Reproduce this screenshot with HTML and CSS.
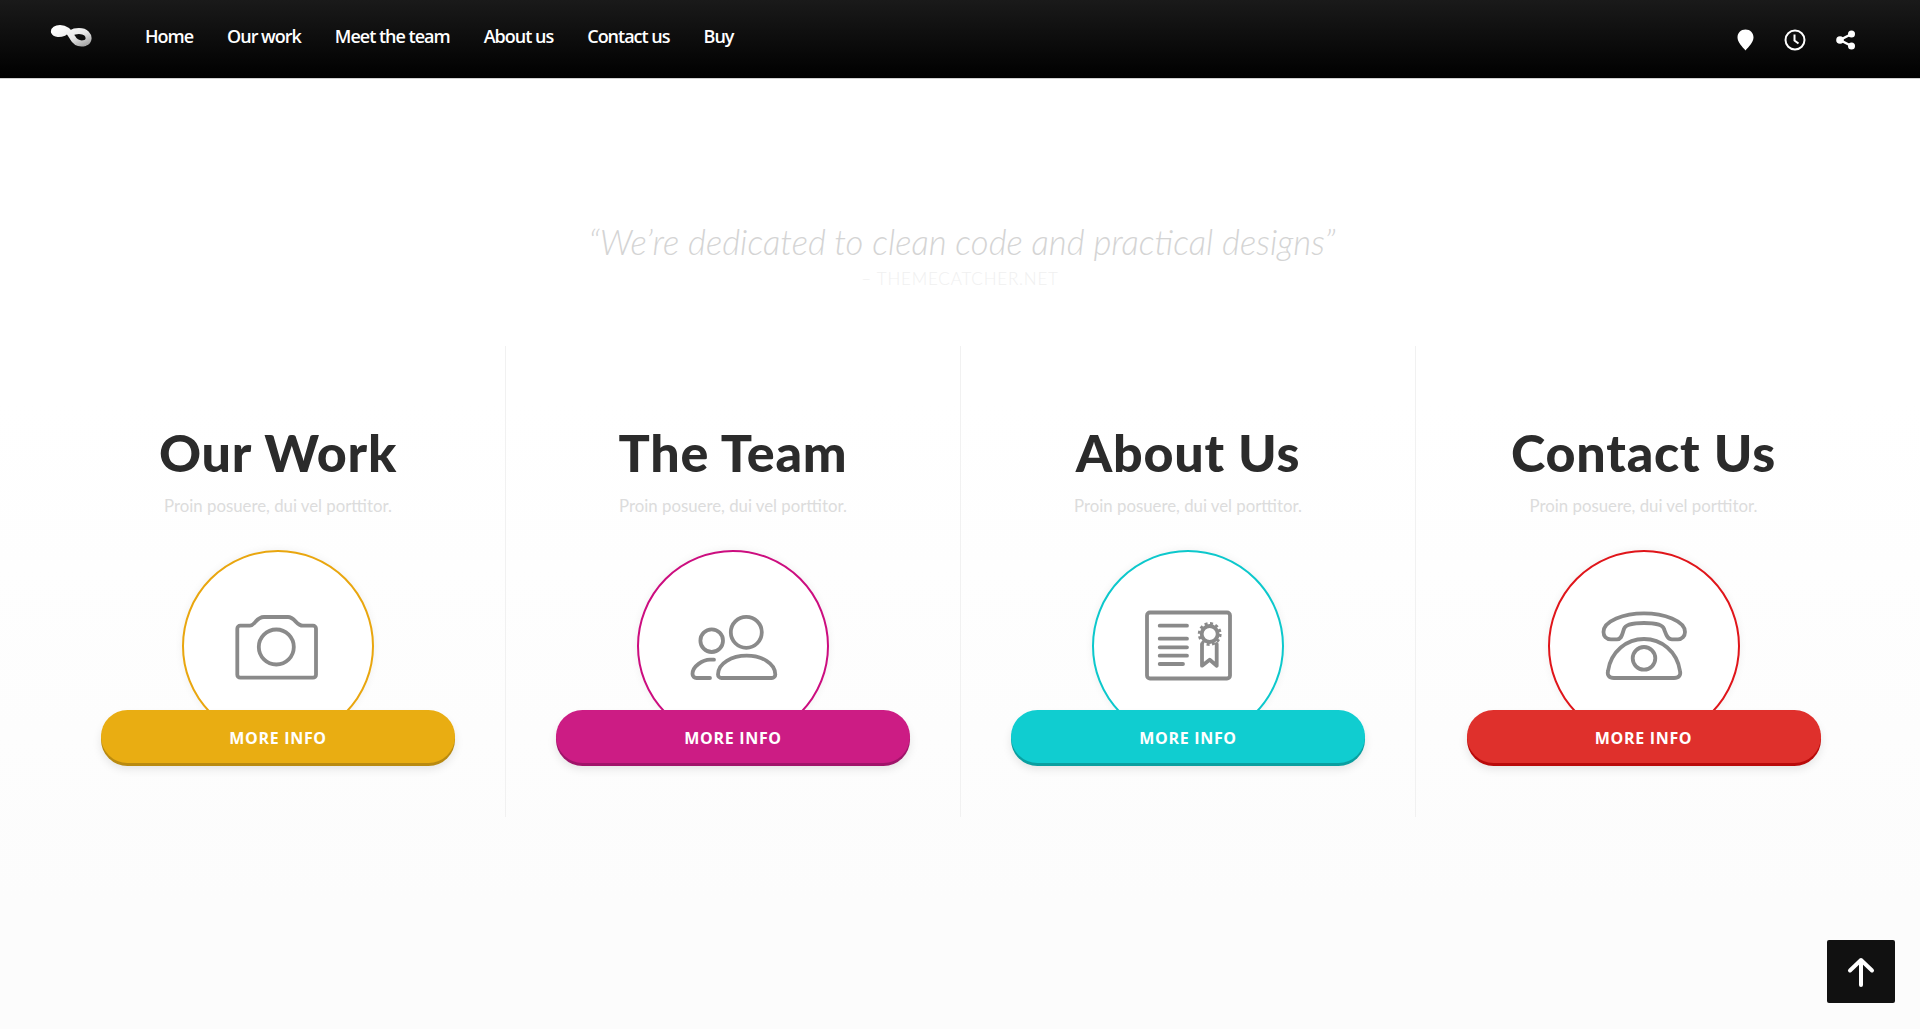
FILE: index.html
```html
<!DOCTYPE html>
<html>
	<head>
		<meta charset="utf-8">
		<title>Themecatcher</title>
		<link rel="stylesheet" href="styles.css">
	</head>
	<body>
		<header class="topbar">
			<a class="logo" href="#">
				<svg width="44" height="24" viewBox="0 0 44 24">
					<defs>
						<linearGradient id="logoFill" x1="0" y1="0" x2="1" y2="1">
							<stop offset="0" stop-color="#ffffff"/>
							<stop offset="0.600" stop-color="#e8e8e8"/>
							<stop offset="1" stop-color="#a8a8a8"/>
						</linearGradient>
					</defs>
					<path d="M21 9C25 6.500 33 6 36.500 9.500C39.500 12.500 39.500 17.500 35 19C29 20.500 25 18 22.500 13.500C20 8.500 16 4 10 4C6 4 3.500 6 4 8C5 10.500 10 10.500 14 9" fill="none" stroke="url(#logoFill)" stroke-width="6" stroke-linecap="round"/>
				</svg>
			</a>
			<nav class="mainnav">
				<a href="#">Home</a>
				<a href="#">Our work</a>
				<a href="#">Meet the team</a>
				<a href="#">About us</a>
				<a href="#">Contact us</a>
				<a href="#">Buy</a>
			</nav>
			<div class="topicons">
				<svg width="17" height="22" viewBox="0 0 17 22"><path d="M8.500 .500C3.800.500.500 3.800.500 8.500c0 4.500 5 9.500 8 13C11.500 18 16.500 13 16.500 8.500 16.500 3.800 13.200.500 8.500 .500Z" fill="#fff"/></svg>
				<svg width="22" height="22" viewBox="0 0 22 22"><circle cx="11" cy="11" r="9.500" fill="none" stroke="#fff" stroke-width="2"/><path d="M10.500 5.500V11.500L14.500 14.500" fill="none" stroke="#fff" stroke-width="2"/></svg>
				<svg width="20" height="20" viewBox="0 0 20 20"><path d="M15.500 4L4 10L15.500 16" fill="none" stroke="#fff" stroke-width="2.500"/><circle cx="15.500" cy="4" r="3.500" fill="#fff"/><circle cx="4" cy="10" r="3.800" fill="#fff"/><circle cx="15.500" cy="16" r="3.500" fill="#fff"/></svg>
			</div>
		</header>

		<section class="quote">
			<p class="quoteText">“We’re dedicated to clean code and practical designs”</p>
			<p class="quoteBy">– THEMECATCHER.NET</p>
		</section>

		<section class="columns">
			<div class="col yellow">
				<h2>Our Work</h2>
				<p class="sub">Proin posuere, dui vel porttitor.</p>
				<div class="ring">
					<svg width="100" height="100" viewBox="0 0 100 100">
						<path d="M12.300 29.700H22C27 29.700 28 21 36 21H60C67 21 68 29.700 75 29.700H85a3 3 0 0 1 3 3V78.700a3 3 0 0 1-3 3H12.300a3 3 0 0 1-3-3V32.700a3 3 0 0 1 3-3Z"/>
						<circle cx="48.300" cy="51" r="17.500"/>
					</svg>
				</div>
				<a class="btn" href="#">MORE INFO</a>
			</div>
			<div class="col pink">
				<h2>The Team</h2>
				<p class="sub">Proin posuere, dui vel porttitor.</p>
				<div class="ring">
					<svg width="100" height="100" viewBox="0 0 100 100">
						<circle cx="63.300" cy="36.300" r="15.500"/>
						<circle cx="28.700" cy="44.700" r="11.300"/>
						<path d="M38.500 82a3.500 3.500 0 0 1-3.500-3.500C35 67 49 59.700 63.700 59.700S92.300 67 92.300 78.500a3.500 3.500 0 0 1-3.500 3.500Z"/>
						<path d="M31 63.700H27C20 63.700 9.500 70 9.500 78a4 4 0 0 0 4 4H27"/>
					</svg>
				</div>
				<a class="btn" href="#">MORE INFO</a>
			</div>
			<div class="col teal">
				<h2>About Us</h2>
				<p class="sub">Proin posuere, dui vel porttitor.</p>
				<div class="ring">
					<svg width="100" height="100" viewBox="0 0 100 100">
						<rect x="9" y="16.500" width="83" height="66" rx="3"/>
						<path d="M21.700 29.700H49M21.700 42.700H49M21.700 51.300H49M21.700 59.700H49M21.700 68H45"/>
						<circle cx="71.700" cy="38" r="8"/>
						<circle class="bumps" cx="71.700" cy="38" r="10.500" stroke-dasharray="3 2.500"/>
						<path d="M64 48V69.700L71.700 63.700L78.700 69.700V48"/>
					</svg>
				</div>
				<a class="btn" href="#">MORE INFO</a>
			</div>
			<div class="col red">
				<h2>Contact Us</h2>
				<p class="sub">Proin posuere, dui vel porttitor.</p>
				<div class="ring">
					<svg width="100" height="100" viewBox="0 0 100 100">
						<path d="M17 43.300C12 43.300 9.500 40 9.500 36C9.500 25 30 17.300 50 17.300S91 25 91 36C91 40 88 43.300 84 43.300H78C73 43.300 72 38 70 33C69 29 62 27 50 27S31 29 30 33C28 38 28 43.300 23 43.300Z"/>
						<path d="M20 82H80C85 82 87 79 86 75C83 55 67 43 50 43S17 55 14 75C13 79 15 82 20 82Z"/>
						<circle cx="50" cy="62.300" r="11.300"/>
					</svg>
				</div>
				<a class="btn" href="#">MORE INFO</a>
			</div>
		</section>

		<a class="toTop" href="#">
			<svg width="28" height="30" viewBox="0 0 28 30"><path d="M14 28V3M3 13.500L14 3L25 13.500" fill="none" stroke="#fff" stroke-width="4" stroke-linecap="round" stroke-linejoin="round"/></svg>
		</a>
	</body>
</html>
```

FILE: styles.css
```css
html, body {
	margin: 0;
	height: 100%;
}
body {
	background: linear-gradient(#ffffff 0, #ffffff 400px, #fcfcfc 900px);
	font-family: "Open Sans", sans-serif;
	overflow: hidden;
}
a {
	text-decoration: none;
}

.topbar {
	display: flex;
	align-items: center;
	height: 79px;
	padding: 0 64px 0 50px;
	background: linear-gradient(#1a1a1a, #000000);
	border-bottom: 1px solid #d0d0d0;
	box-sizing: border-box;
}
.logo {
	display: flex;
	margin: -7px 52px 0 0;
}
.mainnav {
	display: flex;
	gap: 34px;
	margin: -7px 0 0 -1px;
	flex: 1;
}
.mainnav a {
	color: #fff;
	font-size: 18px;
	font-weight: 600;
	letter-spacing: -1px;
}
.topicons {
	display: flex;
	align-items: center;
	gap: 30px;
	margin-top: 2px;
}

.quote {
	padding-top: 143px;
	text-align: center;
}
.quoteText {
	margin: 0 0 0 4px;
	color: #d4d4d4;
	font-family: Lato, sans-serif;
	font-size: 34.700px;
	font-style: italic;
	font-weight: 300;
	line-height: 40px;
}
.quoteBy {
	margin: 5px 0 -1px;
	color: #f0f0f0;
	font-family: Lato, sans-serif;
	font-size: 17px;
	font-weight: 300;
	letter-spacing: 0.8px;
	line-height: 24px;
}

.columns {
	display: grid;
	grid-template-columns: repeat(4, 455px);
	margin: 56px 0 0 51px;
}
.col {
	display: flex;
	flex-direction: column;
	align-items: center;
	padding: 76px 0 54px;
	border-right: 1px solid #f1f1f1;
}
.col:last-child {
	border-right: 0;
}
.col h2 {
	margin: 0 0 2px;
	color: #2b2b2b;
	font-family: Lato, sans-serif;
	font-size: 52px;
	font-weight: 900;
	letter-spacing: 0.8px;
	line-height: 60px;
}
.sub {
	margin: 10px 0 32px;
	color: #dcdcdc;
	font-family: Lato, sans-serif;
	font-size: 16.800px;
	line-height: 24px;
}
.ring {
	display: flex;
	align-items: center;
	justify-content: center;
	box-sizing: border-box;
	width: 192px;
	height: 192px;
	border: 2.500px solid;
	border-radius: 50%;
	background: #fff;
	box-shadow: 0 0 8px rgba(0, 0, 0, .06);
}
.ring svg {
	fill: none;
	stroke: #8a8a8a;
	stroke-width: 3.800;
	stroke-linecap: round;
	stroke-linejoin: round;
}
.ring .bumps {
	stroke-linecap: butt;
	stroke-width: 2.800;
}
.btn {
	position: relative;
	width: 354px;
	height: 53px;
	margin-top: -32px;
	border-radius: 27px;
	color: #fff;
	font-size: 16px;
	font-weight: 700;
	letter-spacing: 0.7px;
	line-height: 56px;
	text-align: center;
}

.yellow .ring { border-color: #e9a60e; }
.yellow .btn { background: #e9ad12; box-shadow: 0 3px 0 #b98a10, 0 6px 10px rgba(0, 0, 0, .1); }
.pink .ring { border-color: #cc0d7f; }
.pink .btn { background: #cc1c84; box-shadow: 0 3px 0 #a0146a, 0 6px 10px rgba(0, 0, 0, .1); }
.teal .ring { border-color: #0cc8cc; }
.teal .btn { background: #10cdd0; box-shadow: 0 3px 0 #0a9fa0, 0 6px 10px rgba(0, 0, 0, .1); }
.red .ring { border-color: #e0151a; }
.red .btn { background: #df302c; box-shadow: 0 3px 0 #b90a0a, 0 6px 10px rgba(0, 0, 0, .1); }

.toTop {
	position: fixed;
	right: 25px;
	bottom: 26px;
	display: flex;
	align-items: center;
	justify-content: center;
	width: 68px;
	height: 63px;
	border-radius: 2px;
	background: #111;
}
```
